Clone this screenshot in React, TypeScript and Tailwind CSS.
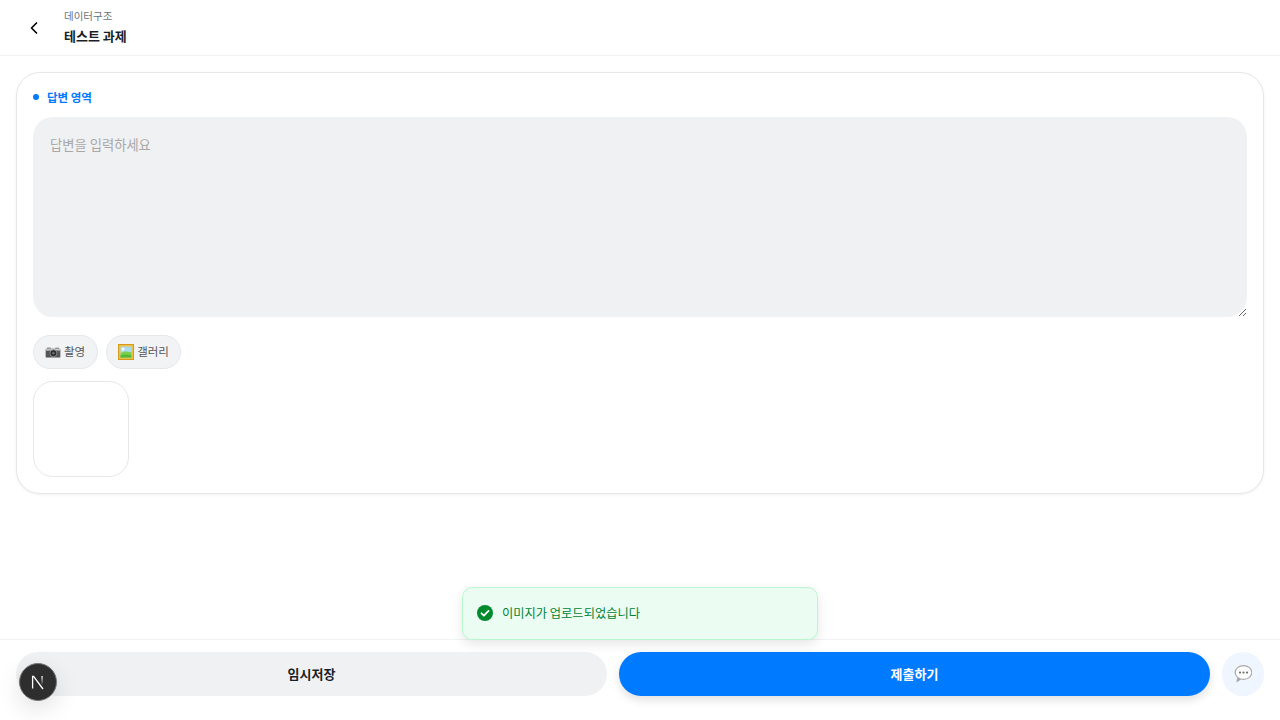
import { ChevronLeft } from 'lucide-react';

const FONT = "font-['Noto_Sans_CJK_KR','Noto_Sans',sans-serif]";

function CameraIcon() {
  return (
    <svg width="16" height="11" viewBox="0 0 17 12" className="shrink-0">
      <rect x="2" y="0.5" width="4" height="2" fill="#9a9a9a" />
      <rect x="11" y="0.5" width="4" height="2" fill="#a8a8a8" />
      <rect x="0.5" y="2" width="16" height="9.5" rx="1" fill="#555" />
      <rect x="0.5" y="2" width="16" height="2" fill="#c4c4c4" />
      <circle cx="9" cy="6.8" r="3.8" fill="#2a2a2a" stroke="#9a9a9a" strokeWidth="0.9" />
      <circle cx="9" cy="6.8" r="1.5" fill="#666" />
    </svg>
  );
}

function PictureIcon() {
  return (
    <svg width="16" height="16" viewBox="0 0 16 16" className="shrink-0">
      <rect x="0" y="0" width="16" height="16" fill="#d49a1e" />
      <rect x="1" y="1" width="14" height="14" fill="#f0c042" />
      <rect x="2.5" y="2.5" width="11" height="11" fill="#a9dcf0" />
      <circle cx="5" cy="5" r="1.5" fill="#fff" />
      <path d="M2.5 9.5C5 7 9 7 13.5 8.5v5h-11z" fill="#7ccf4a" />
      <path d="M2.5 11.5c4-1.5 7-1 11 0v2h-11z" fill="#56b836" />
    </svg>
  );
}

function BubbleIcon() {
  return (
    <svg width="18" height="18" viewBox="0 0 18 18" className="shrink-0">
      <path d="M3.5 12.5L2.3 17.5l5-3.2z" fill="#a3a3a3" />
      <ellipse cx="9.5" cy="7.5" rx="8.3" ry="6.9" fill="#fdfdfd" stroke="#aaa" strokeWidth="1.2" />
      <circle cx="6" cy="7.6" r="1.1" fill="#707070" />
      <circle cx="9.5" cy="7.6" r="1.1" fill="#707070" />
      <circle cx="13" cy="7.6" r="1.1" fill="#707070" />
    </svg>
  );
}

export default function App() {
  return (
    <div className={`${FONT} relative flex h-[720px] flex-col overflow-hidden bg-white text-[#191f28]`}>
      {/* 헤더 */}
      <header className="flex h-[56px] items-center border-b border-[#f2f3f5] pl-[22px]">
        <button className="flex h-6 w-6 items-center justify-center text-black">
          <ChevronLeft size={20} strokeWidth={2} />
        </button>
        <div className="ml-[18px] flex flex-col">
          <span className="text-[10.5px] leading-[14px] text-[#6b7280]">데이터구조</span>
          <span className="mt-[3px] text-[13px] leading-[20px] font-bold">테스트 과제</span>
        </div>
      </header>

      {/* 본문 */}
      <main className="flex-1 p-4">
        <section className="rounded-[24px] border border-[#e5e7eb] bg-white p-4 shadow-[0_1px_3px_rgba(0,0,0,0.06)]">
          <div className="flex h-[16px] items-center gap-2">
            <span className="h-[6px] w-[6px] rounded-full bg-[#007aff]" />
            <span className="-mt-[1px] text-[11.5px] leading-4 font-bold text-[#007aff]">답변 영역</span>
          </div>
          <textarea
            placeholder="답변을 입력하세요"
            className="mt-3 block h-[200px] w-full rounded-[20px] bg-[#f0f1f3] px-[17px] py-[18px] text-[13.3px] leading-[20px] outline-none placeholder:text-[#a8a8a8]"
          />
          <div className="mt-[18px] flex gap-2">
            <button className="flex h-[34px] w-[65px] items-center justify-center gap-[3px] rounded-full border border-[#e5e7eb] bg-[#f2f3f5] pr-[1px] text-[11.5px] text-[#555]">
              <CameraIcon />
              <span>촬영</span>
            </button>
            <button className="flex h-[34px] w-[75px] items-center justify-center gap-[3px] rounded-full border border-[#e5e7eb] bg-[#f2f3f5] text-[11.5px] text-[#555]">
              <PictureIcon />
              <span>갤러리</span>
            </button>
          </div>
          <div className="mt-3 h-[96px] w-[96px] rounded-[20px] border border-[#e5e7eb] bg-white" />
        </section>
      </main>

      {/* 하단 버튼 */}
      <footer className="flex h-[81px] gap-3 border-t border-[#f2f3f5] bg-white px-4 pt-3">
        <button className="h-11 flex-1 rounded-full bg-[#f0f1f3] pb-[1px] text-[13px] font-bold text-[#191f28]">임시저장</button>
        <button className="h-11 flex-1 rounded-full bg-[#007aff] pb-[1px] text-[13px] font-bold text-white shadow-[0_4px_10px_rgba(0,0,0,0.12)]">제출하기</button>
        <button className="flex h-11 w-[42px] items-center justify-center rounded-full bg-[#f0f6ff]">
          <BubbleIcon />
        </button>
      </footer>

      {/* 토스트 */}
      <div className="absolute top-[587px] left-[462px] flex h-[53px] w-[356px] items-center gap-[8px] rounded-[10px] border border-[#b9f8cf] bg-[#ebfdf3] pb-[1px] pl-[13px] shadow-[0_4px_12px_rgba(0,0,0,0.1)]">
        <svg width="18" height="18" viewBox="0 0 18 18" className="shrink-0">
          <circle cx="9" cy="9" r="8" fill="#008a2e" />
          <path d="M5.5 9.3l2.4 2.4 4.6-4.8" fill="none" stroke="#fff" strokeWidth="1.8" strokeLinecap="round" strokeLinejoin="round" />
        </svg>
        <span className="text-[12.25px] leading-5 text-[#008236]">이미지가 업로드되었습니다</span>
      </div>

      {/* Next.js dev 배지 */}
      <div className="absolute top-[663px] left-[19px] flex h-[38px] w-[38px] items-center justify-center rounded-full border border-[#777] bg-[#2e2e2e] shadow-[0_8px_24px_rgba(0,0,0,0.12)]">
        <svg width="16" height="16" viewBox="0 0 16 16">
          <defs>
            <linearGradient id="nFade" x1="0" y1="0" x2="0" y2="1">
              <stop offset="0" stopColor="#fff" />
              <stop offset="1" stopColor="#fff" stopOpacity="0.1" />
            </linearGradient>
          </defs>
          <path d="M2.6 14.5V2.3h1L13 15" fill="none" stroke="#fff" strokeWidth="1.3" />
          <rect x="11.4" y="2" width="1.3" height="8.5" fill="url(#nFade)" />
        </svg>
      </div>
    </div>
  );
}
